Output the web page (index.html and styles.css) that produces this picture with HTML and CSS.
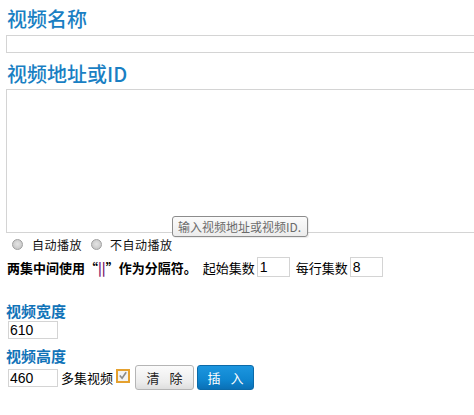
FILE: index.html
```html
<!DOCTYPE html>
<html lang="zh">
<head>
<meta charset="utf-8">
<title>插入视频</title>
<link rel="stylesheet" href="styles.css">
</head>
<body>
<div class="page">
  <h2 class="title t1">视频名称</h2>
  <input class="wide" type="text">
  <h2 class="title t2">视频地址或ID</h2>
  <div class="ta-wrap">
    <textarea class="area"></textarea>
    <div class="tip">输入视频地址或视频ID.</div>
  </div>
  <div class="radios">
    <span class="radio"></span><span class="rlabel">自动播放</span>
    <span class="radio r2"></span><span class="rlabel">不自动播放</span>
  </div>
  <div class="seprow">
    <b class="sepnote">两集中间使用“<span class="bar">||</span>”作为分隔符。</b>
    <span class="lbl l1">起始集数</span><input class="num" type="text" value="1">
    <span class="lbl l2">每行集数</span><input class="num" type="text" value="8">
  </div>
  <h3 class="sub s1">视频宽度</h3>
  <input class="small w" type="text" value="610">
  <h3 class="sub s2">视频高度</h3>
  <div class="actions">
    <input class="small" type="text" value="460">
    <span class="multi">多集视频</span>
    <span class="check"><svg width="11" height="11" viewBox="0 0 11 11"><path d="M2 5.5 L4.5 8.5 L9 2" fill="none" stroke="#8a8a8a" stroke-width="1.8"/></svg></span>
    <button class="btn clear" type="button">清 除</button>
    <button class="btn insert" type="button">插 入</button>
  </div>
</div>
</body>
</html>
```
FILE: styles.css
```css
html, body {
  margin: 0;
  padding: 0;
  background: #fff;
  overflow: hidden;
}
body {
  font-family: "Noto Sans CJK SC", "Noto Sans", sans-serif;
  color: #000;
}
.page {
  padding-left: 6px;
}
.title {
  margin: 0;
  font-size: 20px;
  font-weight: 500;
  line-height: 24px;
  color: #1a7fc3;
  padding-left: 1px;
}
.t1 { margin-top: 7px; }
.t2 { margin-top: 9px; }
.wide {
  display: block;
  box-sizing: border-box;
  width: 490px;
  height: 18px;
  margin: 4px 0 0 0;
  border: 1px solid #d4d4d4;
  padding: 0;
  outline: none;
}
.ta-wrap {
  position: relative;
  margin-top: 3px;
}
.area {
  display: block;
  box-sizing: border-box;
  width: 490px;
  height: 144px;
  margin: 0;
  border: 1px solid #d4d4d4;
  padding: 0;
  resize: none;
  outline: none;
}
.tip {
  position: absolute;
  left: 166px;
  top: 127px;
  box-sizing: border-box;
  width: 136px;
  height: 21px;
  padding-left: 5px;
  border: 1px solid #8c8c8c;
  border-radius: 3px;
  background: linear-gradient(#fbfbfb, #ececec);
  color: #6b6b6b;
  font-size: 12px;
  line-height: 19px;
  white-space: nowrap;
  box-shadow: 1px 1px 1px rgba(0,0,0,0.08);
}
.radios {
  display: flex;
  align-items: center;
  height: 18px;
  margin-top: 2px;
  font-size: 12px;
}
.radio {
  box-sizing: border-box;
  width: 11px;
  height: 11px;
  border-radius: 50%;
  border: 1px solid #a0a0a0;
  background: radial-gradient(circle at 50% 45%, #e4e4e4 0, #d0d0d0 55%, #bcbcbc 100%);
  margin-left: 6px;
  margin-right: 9px;
}
.r2 { margin-left: 9px; margin-right: 8px; }
.rlabel { color: #111; letter-spacing: 0.5px; }
.seprow {
  display: flex;
  align-items: center;
  height: 20px;
  margin-top: 4px;
  font-size: 13px;
  white-space: nowrap;
}
.sepnote {
  font-weight: bold;
  padding-left: 1px;
}
.bar { color: #7a1a6e; }
.lbl { margin-right: 2px; }
.l1 { margin-left: 6px; }
.l2 { margin-left: 6px; }
.num {
  box-sizing: border-box;
  width: 33px;
  height: 20px;
  margin: 0;
  border: 1px solid #d4d4d4;
  padding: 0 2px;
  font-family: "Liberation Sans", Arial, sans-serif;
  font-size: 14px;
  color: #000;
  outline: none;
}
.sub {
  margin: 0;
  font-size: 15px;
  font-weight: bold;
  line-height: 18px;
  color: #1073b8;
}
.s1 { margin-top: 25px; }
.s2 { margin-top: 8px; }
.small {
  display: block;
  box-sizing: border-box;
  width: 50px;
  height: 18px;
  margin: 0 0 0 2px;
  border: 1px solid #d4d4d4;
  padding: 0 1px;
  font-family: "Liberation Sans", Arial, sans-serif;
  font-size: 14px;
  color: #000;
  outline: none;
}
.w { margin-top: 1px; }
.actions {
  display: flex;
  align-items: center;
  height: 25px;
}
.multi {
  font-size: 13px;
  margin-left: 3px;
}
.check {
  box-sizing: border-box;
  display: flex;
  align-items: center;
  justify-content: center;
  width: 14px;
  height: 14px;
  margin-left: 3px;
  margin-top: -4px;
  border: 2px solid #e5a12f;
  background: #f2f2f2;
}
.check svg { display: block; }
.btn {
  box-sizing: border-box;
  height: 25px;
  margin: 0;
  padding: 0;
  border-radius: 3px;
  font-family: "Noto Sans CJK SC", sans-serif;
  font-size: 13px;
  line-height: 23px;
  word-spacing: 7px;
  cursor: pointer;
}
.clear {
  width: 59px;
  margin-left: 5px;
  border: 1px solid #b5b5b5;
  background: linear-gradient(#fbfbfb, #ececec 70%, #dedede);
  color: #222;
}
.insert {
  width: 57px;
  margin-left: 3px;
  border: 1px solid #0b6aa9;
  background: linear-gradient(#1c96df, #0f86d0 60%, #0a70b6);
  color: #fff;
}
```
